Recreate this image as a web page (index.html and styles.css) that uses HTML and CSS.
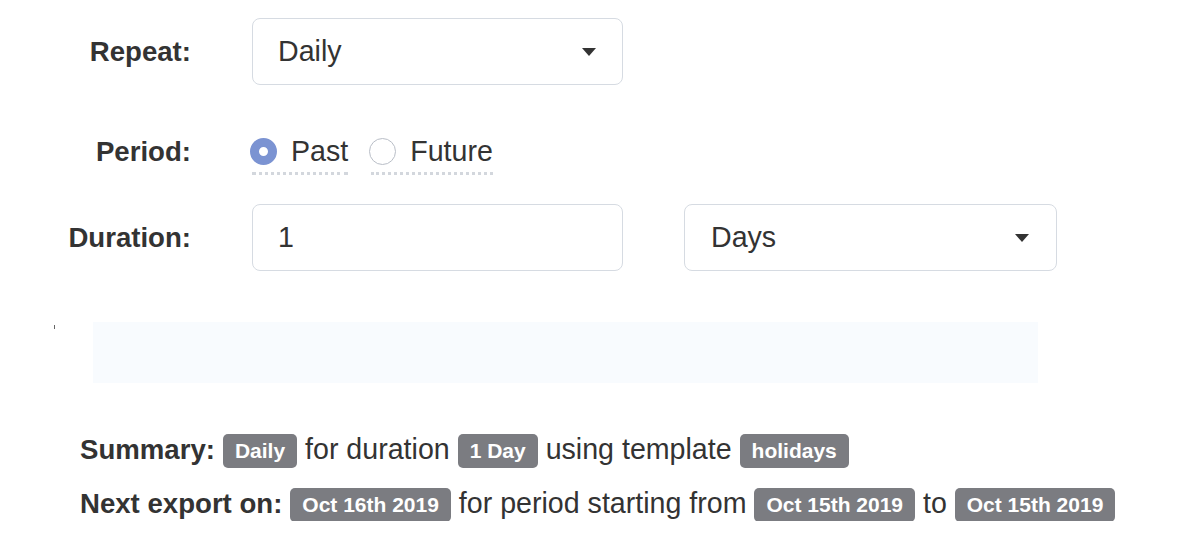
FILE: index.html
```html
<!DOCTYPE html>
<html>
<head>
<meta charset="utf-8">
<link rel="stylesheet" href="styles.css">
</head>
<body>
<div class="form">
  <div class="row row-repeat">
    <div class="label">Repeat:</div>
    <div class="select">
      <span>Daily</span>
      <span class="caret"></span>
    </div>
  </div>
  <div class="row row-period">
    <div class="label">Period:</div>
    <div class="radios">
      <label class="radio">
        <span class="circle checked"></span>
        <span>Past</span>
      </label>
      <label class="radio">
        <span class="circle"></span>
        <span>Future</span>
      </label>
    </div>
  </div>
  <div class="row row-duration">
    <div class="label">Duration:</div>
    <div class="input">1</div>
    <div class="select select-wide">
      <span>Days</span>
      <span class="caret"></span>
    </div>
  </div>
  <div class="preview">
    <span class="tick"></span>
    <div class="box"></div>
  </div>
  <div class="summary">
    <p class="line"><strong>Summary:</strong> <span class="badge">Daily</span> for duration <span class="badge">1 Day</span> using template <span class="badge">holidays</span></p>
    <p class="line"><strong>Next export on:</strong> <span class="badge">Oct 16th 2019</span> for period starting from <span class="badge">Oct 15th 2019</span> to <span class="badge">Oct 15th 2019</span></p>
  </div>
</div>
</body>
</html>
```
FILE: styles.css
```css
html, body {
  margin: 0;
  padding: 0;
  background: #ffffff;
}
body {
  font-family: "Liberation Sans", Arial, Helvetica, sans-serif;
  font-size: 28.6px;
  color: #333333;
}
.form {
  padding-top: 18px;
}
.row {
  display: flex;
  align-items: center;
}
.label {
  width: 191px;
  text-align: right;
  font-weight: bold;
  font-size: 27.6px;
  margin-right: 61px;
  flex: none;
}
.select, .input {
  box-sizing: border-box;
  width: 371px;
  height: 67px;
  border: 1.5px solid #d6dbe2;
  border-radius: 8px;
  display: flex;
  align-items: center;
  justify-content: space-between;
  padding: 0 26px 0 25px;
  flex: none;
}
.select-wide {
  width: 373px;
  margin-left: 61px;
  padding-left: 26px;
  padding-right: 27px;
}
.caret {
  width: 0;
  height: 0;
  border-left: 7px solid transparent;
  border-right: 7px solid transparent;
  border-top: 8px solid #333333;
}
.row-period {
  margin-top: 33px;
  height: 67px;
}
.radios {
  display: flex;
  gap: 21px;
  margin-left: -2px;
}
.radio {
  display: flex;
  align-items: center;
  gap: 14px;
  position: relative;
}
.radio::after {
  content: "";
  position: absolute;
  left: 2px;
  right: 0;
  bottom: -7px;
  border-bottom: 3px dotted #d3d7dd;
}
.circle {
  box-sizing: border-box;
  width: 27px;
  height: 27px;
  border-radius: 50%;
  border: 1px solid #b9bec7;
  background: #ffffff;
  display: inline-block;
}
.circle.checked {
  border: 9px solid #7b93d2;
  background: #ffffff;
}
.row-duration {
  margin-top: 19px;
}
.preview {
  display: flex;
  align-items: flex-start;
  margin-top: 51px;
}
.tick {
  width: 1px;
  height: 4px;
  background: #666666;
  margin-left: 54px;
  margin-top: 3px;
}
.box {
  width: 945px;
  height: 61px;
  background: #f8fbfe;
  margin-left: 38px;
}
.summary {
  padding-left: 80px;
  margin-top: 48px;
}
.line {
  margin: 0;
  line-height: 36px;
  height: 36px;
}
.line + .line {
  margin-top: 18px;
}
.line strong {
  font-weight: bold;
  font-size: 27.6px;
}
.badge {
  display: inline-block;
  background: #7b7c81;
  color: #ffffff;
  font-weight: bold;
  font-size: 21px;
  line-height: 1;
  padding: 6.5px 12px;
  border-radius: 5px;
  vertical-align: 1px;
}
```
